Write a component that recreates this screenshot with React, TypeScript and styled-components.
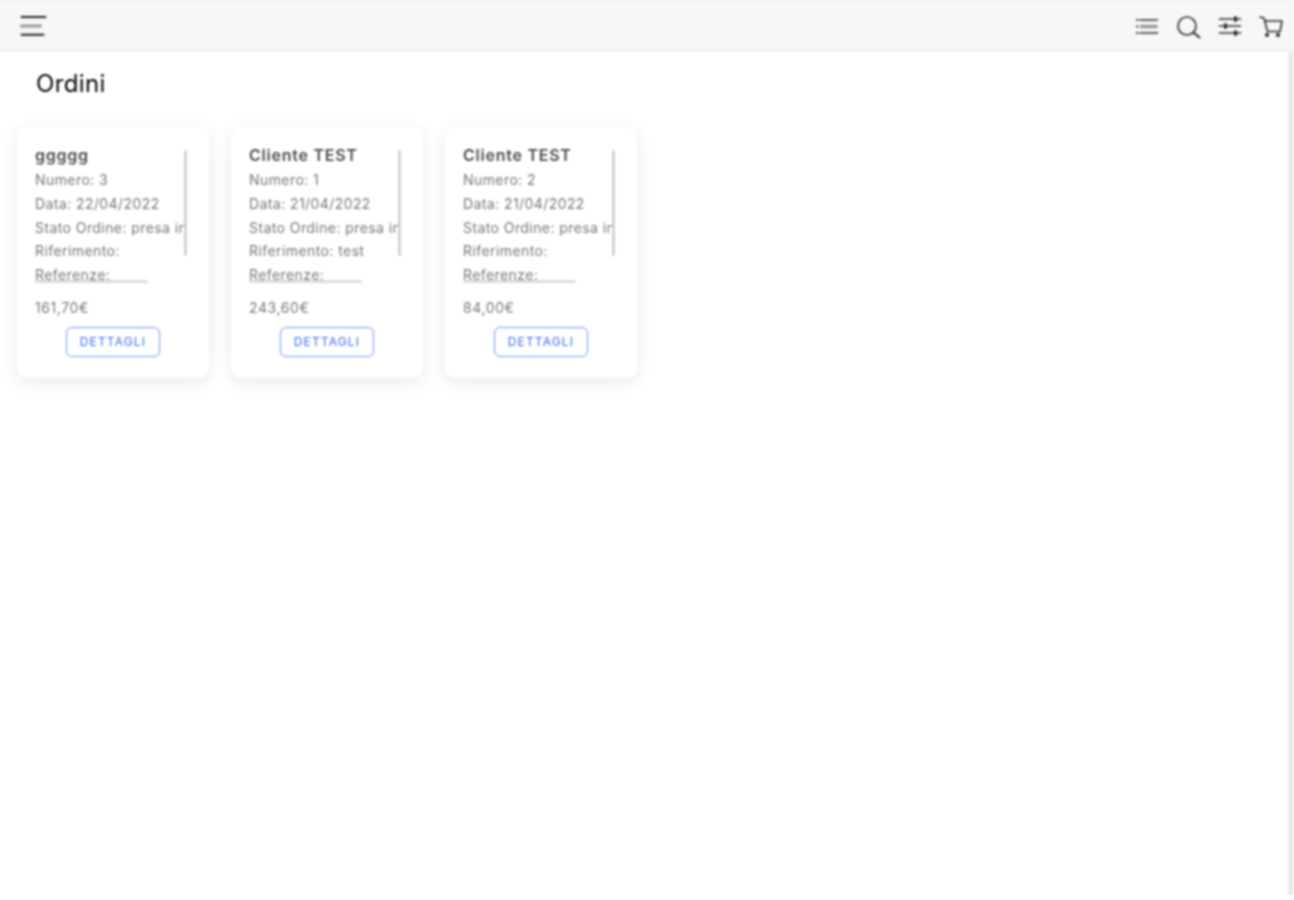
import React from "react";
import styled, { createGlobalStyle } from "styled-components";

const Global = createGlobalStyle`
  html, body { margin: 0; padding: 0; background: #fff; overflow: hidden; }
  body { font-family: Inter, "Liberation Sans", sans-serif; }
`;

const Page = styled.div`
  position: relative;
  width: 1294px;
  height: 900px;
  overflow: hidden;
  filter: blur(0.8px);
`;

const TopBar = styled.header`
  height: 51px;
  box-sizing: border-box;
  background: #f7f7f7;
  border-top: 1px solid #eaeaea;
  border-bottom: 1px solid #e6e6e6;
  display: flex;
  align-items: center;
  justify-content: space-between;
  padding: 0 8px 0 20px;
`;

const IconGroup = styled.div`
  display: flex;
  align-items: center;
  gap: 13.5px;
`;

const Icon = styled.svg`
  width: 28px;
  height: 28px;
  display: block;
  fill: none;
  stroke: #2e2e2e;
  stroke-width: 1.6;
  stroke-linecap: round;
  stroke-linejoin: round;
`;

const MenuIcon = styled(Icon)`
  stroke: #222;
  stroke-width: 2;
`;

const Title = styled.h1`
  margin: 0;
  padding: 17px 0 0 36px;
  font-size: 24px;
  line-height: 32px;
  font-weight: 400;
  letter-spacing: 0.35px;
  color: #000;
`;

const CardRow = styled.main`
  display: flex;
  gap: 22px;
  padding: 27px 0 0 17px;
`;

const Card = styled.article`
  position: relative;
  box-sizing: border-box;
  width: 192px;
  height: 251px;
  padding: 18px 21px 0 18px;
  background: #fff;
  border-radius: 10px;
  box-shadow: 0 4px 18px rgba(0, 0, 0, 0.09);
  display: flex;
  flex-direction: column;
`;

const Scroller = styled.div`
  position: relative;
  width: 154px;
  height: 148px;
  overflow: hidden;
  white-space: nowrap;
`;

const Name = styled.div`
  font-size: 16px;
  line-height: 20px;
  font-weight: 600;
  letter-spacing: 0.75px;
  color: #4a4a4a;
  margin-bottom: 3px;
`;

const Line = styled.div`
  font-size: 14px;
  line-height: 23.75px;
  letter-spacing: 0.42px;
  color: #777;
`;

const VScroll = styled.div`
  position: absolute;
  top: 23px;
  left: 167px;
  width: 3px;
  height: 106px;
  border-radius: 2px;
  background: #d2d2d2;
`;

const HScroll = styled.div`
  position: absolute;
  top: 152.500px;
  left: 18px;
  width: 113px;
  height: 3px;
  border-radius: 2px;
  background: #dcdcdc;
`;

const Price = styled.div`
  font-size: 14px;
  line-height: 20px;
  letter-spacing: 0.6px;
  color: #777;
  margin-top: 5px;
`;

const Details = styled.button`
  align-self: center;
  margin: 8.5px 0 0 3px;
  width: 94px;
  height: 30px;
  box-sizing: border-box;
  padding: 0;
  background: #fff;
  border: 1px solid #6f94f5;
  border-radius: 6px;
  color: #3a6bea;
  font-family: inherit;
  font-size: 12px;
  letter-spacing: 1.15px;
`;

const PageScroll = styled.div`
  position: absolute;
  top: 52px;
  right: 0;
  width: 6px;
  height: 843px;
  background: #ebebeb;
`;

const orders = [
  { name: "ggggg", num: 3, date: "22/04/2022", ref: "", total: "161,70€" },
  { name: "Cliente TEST", num: 1, date: "21/04/2022", ref: "test", total: "243,60€" },
  { name: "Cliente TEST", num: 2, date: "21/04/2022", ref: "", total: "84,00€" },
];

export default function App() {
  return (
    <Page>
      <Global />
      <TopBar>
        <MenuIcon viewBox="0 0 28 28">
          <path d="M1.500 5h24M1.500 22.800h22" />
          <path d="M1.500 14h19" stroke="#9a9a9a" strokeWidth="3" />
        </MenuIcon>
        <IconGroup>
          <Icon viewBox="0 0 28 28">
            <path d="M6 8h17.500M6 21h17.500" />
            <path d="M6 14.500h17.500" stroke="#999" strokeWidth="3.500" strokeLinecap="butt" />
            <path d="M3 8h.5M3 14.500h.5M3 21h.5" strokeWidth="2" />
          </Icon>
          <Icon viewBox="0 0 28 28">
            <circle cx="12" cy="14" r="9" />
            <path d="M18.500 20.500l6 5" strokeWidth="2" />
          </Icon>
          <Icon viewBox="0 0 28 28">
            <path d="M2.500 7h21M2.500 14h21M2.500 21h21" />
            <path d="M18.500 5.500v3M8.500 12.500v3M18.500 19.500v3" strokeWidth="3" />
          </Icon>
          <Icon viewBox="0 0 28 28">
            <path d="M2 5l4 1 3.500 13.500H22L24 9H7" />
            <circle cx="9" cy="23" r="1.300" fill="#2e2e2e" />
            <circle cx="20" cy="23" r="1.300" fill="#2e2e2e" />
          </Icon>
        </IconGroup>
      </TopBar>
      <Title>Ordini</Title>
      <CardRow>
        {orders.map((o) => (
          <Card key={o.num}>
            <Scroller>
              <Name>{o.name}</Name>
              <Line>Numero: {o.num}</Line>
              <Line>Data: {o.date}</Line>
              <Line>Stato Ordine: presa in</Line>
              <Line>Riferimento: {o.ref}</Line>
              <Line>Referenze:</Line>
            </Scroller>
            <VScroll />
            <HScroll />
            <Price>{o.total}</Price>
            <Details>DETTAGLI</Details>
          </Card>
        ))}
      </CardRow>
      <PageScroll />
    </Page>
  );
}
